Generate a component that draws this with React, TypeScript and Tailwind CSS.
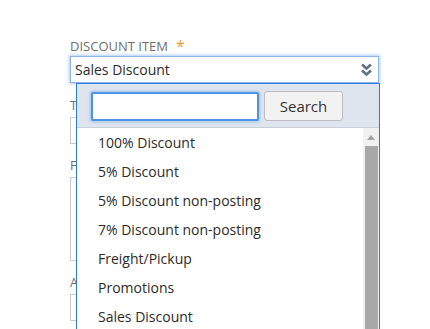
const options = [
  "100% Discount",
  "5% Discount",
  "5% Discount non-posting",
  "7% Discount non-posting",
  "Freight/Pickup",
  "Promotions",
  "Sales Discount",
  "Trade Discount",
]

function Field({ label, tall }: { label: string; tall?: boolean }) {
  return (
    <div className="flex flex-col">
      <span className="text-[12.5px] leading-[14px] text-[#6f6f6f] uppercase">{label}</span>
      <div className={`mt-[4px] w-[308px] border border-[#cccccc] bg-white ${tall ? "h-[84px]" : "h-[27px]"}`} />
    </div>
  )
}

// bold double chevron, as on the select
function DoubleChevron() {
  return (
    <svg width="13" height="14" viewBox="0 0 13 14" className="text-[#5f7284]">
      <path d="M2 1.5 L6.5 5.5 L11 1.5" fill="none" stroke="currentColor" strokeWidth="2.6" strokeLinejoin="miter" />
      <path d="M2 7.5 L6.5 11.5 L11 7.5" fill="none" stroke="currentColor" strokeWidth="2.6" strokeLinejoin="miter" />
    </svg>
  )
}

export default function App() {
  return (
    <div className="h-[329px] w-[430px] overflow-hidden bg-white" style={{ fontFamily: '"Open Sans", "Liberation Sans", sans-serif' }}>
      <div className="relative ml-[70px] w-[309px] pt-[39px]">
        {/* Discount item select */}
        <div className="flex items-center gap-[8px] text-[13px] leading-[14px] text-[#6f6f6f]">
          <span>DISCOUNT ITEM</span>
          <span className="text-[16px] leading-[14px] text-[#e2a23a]">*</span>
        </div>
        <div className="mt-[3px] flex h-[27px] w-[309px] items-center justify-between border border-[#8db5e8] bg-white pl-[4px] pr-[5px] shadow-[0_0_3px_1px_rgba(120,170,235,0.6)]">
          <span className="text-[14px] text-[#2b2b2b]">Sales Discount</span>
          <DoubleChevron />
        </div>

        {/* Fields hidden behind the dropdown */}
        <div className="mt-[16px] flex flex-col gap-[15px]">
          <Field label="Tax Code" />
          <Field label="Fulfillment Notes" tall />
          <Field label="Amount" />
        </div>

        {/* Dropdown popup */}
        <div className="absolute left-[6px] top-[83px] w-[304px] border border-[#2c7be5] bg-white">
          <div className="flex items-center gap-[5px] border-b border-[#c9d0d9] bg-[#dfe5ee] px-[14px] pb-[6px] pt-[7px]">
            <div className="h-[29px] w-[168px] rounded-[2px] border-2 border-[#4d94e6] bg-white shadow-[0_0_3px_1px_rgba(110,165,235,0.55)]" />
            <button className="h-[30px] w-[79px] rounded-[3px] border border-[#bdbdbd] bg-[#f2f2f2] text-[15px] text-[#333333]">
              Search
            </button>
          </div>
          <div className="flex">
            <ul className="flex-1">
              {options.map((o) => (
                <li key={o} className="flex h-[29px] items-center pl-[21px] text-[14px] text-[#2b2b2b]">
                  {o}
                </li>
              ))}
            </ul>
            <div className="flex w-[16px] flex-col items-center bg-[#f1f1f1] pt-[7px]">
              <div className="h-0 w-0 border-x-[4px] border-b-[5px] border-x-transparent border-b-[#a3a3a3]" />
              <div className="mt-[6px] w-[13px] flex-1 bg-[#a8a8a8]" />
            </div>
          </div>
        </div>
      </div>
    </div>
  )
}
